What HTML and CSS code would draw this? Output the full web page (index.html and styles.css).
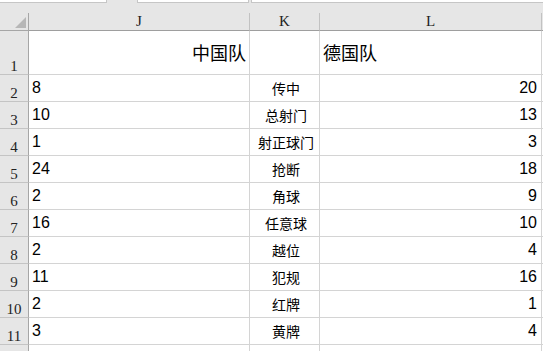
FILE: index.html
```
<!DOCTYPE html>
<html lang="zh">
<head>
<meta charset="utf-8">
<link rel="stylesheet" href="styles.css">
</head>
<body>
<div class="topbar">
  <div class="box b1"></div>
  <div class="sep s1"></div>
  <div class="box b2"></div>
  <div class="sep s2"></div>
  <div class="box b3"></div>
</div>
<div class="sheet">
  <div class="corner"><span class="tri"></span></div>
  <div class="colhead">J</div>
  <div class="colhead">K</div>
  <div class="colhead">L</div>
  <div class="colhead last"></div>

  <div class="rowhead tall">1</div>
  <div class="cell tall title right">中国队</div>
  <div class="cell tall"></div>
  <div class="cell tall title left">德国队</div>
  <div class="cell tall extra"></div>

  <div class="rowhead">2</div><div class="cell num">8</div><div class="cell mid">传中</div><div class="cell num right">20</div><div class="cell extra"></div>
  <div class="rowhead">3</div><div class="cell num">10</div><div class="cell mid">总射门</div><div class="cell num right">13</div><div class="cell extra"></div>
  <div class="rowhead">4</div><div class="cell num">1</div><div class="cell mid">射正球门</div><div class="cell num right">3</div><div class="cell extra"></div>
  <div class="rowhead">5</div><div class="cell num">24</div><div class="cell mid">抢断</div><div class="cell num right">18</div><div class="cell extra"></div>
  <div class="rowhead">6</div><div class="cell num">2</div><div class="cell mid">角球</div><div class="cell num right">9</div><div class="cell extra"></div>
  <div class="rowhead">7</div><div class="cell num">16</div><div class="cell mid">任意球</div><div class="cell num right">10</div><div class="cell extra"></div>
  <div class="rowhead">8</div><div class="cell num">2</div><div class="cell mid">越位</div><div class="cell num right">4</div><div class="cell extra"></div>
  <div class="rowhead">9</div><div class="cell num">11</div><div class="cell mid">犯规</div><div class="cell num right">16</div><div class="cell extra"></div>
  <div class="rowhead">10</div><div class="cell num">2</div><div class="cell mid">红牌</div><div class="cell num right">1</div><div class="cell extra"></div>
  <div class="rowhead">11</div><div class="cell num">3</div><div class="cell mid">黄牌</div><div class="cell num right">4</div><div class="cell extra"></div>
  <div class="rowhead"></div><div class="cell"></div><div class="cell"></div><div class="cell"></div><div class="cell extra"></div>
</div>
</body>
</html>
```
FILE: styles.css
```
html, body {
  margin: 0;
  padding: 0;
  background: #e6e6e6;
  width: 543px;
  height: 351px;
  overflow: hidden;
}

.topbar {
  display: flex;
  height: 13px;
  align-items: flex-start;
}
.box {
  height: 2px;
  background: #ffffff;
  border-bottom: 1px solid #c6c6c6;
}
.b1 { width: 106px; border-right: 1px solid #c6c6c6; }
.s1 { width: 30px; }
.b2 { width: 110px; border-left: 1px solid #c6c6c6; border-right: 1px solid #c6c6c6; }
.s2 { width: 2px; }
.b3 { flex: 1; border-left: 1px solid #c6c6c6; }

.sheet {
  display: grid;
  grid-template-columns: 29px 221px 70px 222px 1fr;
  grid-template-rows: 18px 44px repeat(11, 27px);
}

.corner {
  background: #e6e6e6;
  border-right: 1px solid #a6a6a6;
  border-bottom: 1px solid #a6a6a6;
  position: relative;
}
.tri {
  position: absolute;
  left: 15px;
  top: 4px;
  width: 0;
  height: 0;
  border-left: 11px solid transparent;
  border-bottom: 11px solid #b7b7b7;
}

.colhead {
  background: #e6e6e6;
  border-right: 1px solid #c2c2c2;
  border-bottom: 1px solid #9e9e9e;
  font-family: "Liberation Serif", serif;
  font-size: 15px;
  color: #222;
  display: flex;
  align-items: flex-end;
  justify-content: center;
  line-height: 15px;
  padding-bottom: 1px;
}
.colhead.last { border-right: none; }

.rowhead {
  background: #e6e6e6;
  border-right: 1px solid #a6a6a6;
  border-bottom: 1px solid #c4c4c4;
  font-family: "Liberation Serif", serif;
  font-size: 15px;
  color: #222;
  display: flex;
  align-items: flex-end;
  justify-content: center;
  line-height: 14px;
  padding-bottom: 1px;
}

.cell {
  background: #ffffff;
  border-right: 1px solid #d4d4d4;
  border-bottom: 1px solid #d4d4d4;
  display: flex;
  align-items: flex-end;
  white-space: nowrap;
  overflow: hidden;
  color: #000;
}
.cell.extra { border-right: none; }

.title {
  font-family: "Noto Sans CJK SC", sans-serif;
  font-size: 18px;
  align-items: center;
  line-height: 22px;
  padding-bottom: 1px;
}
.left { justify-content: flex-start; padding-left: 3px; }
.right { justify-content: flex-end; padding-right: 3px; }

.num {
  font-family: "Liberation Sans", Arial, sans-serif;
  font-size: 16px;
  line-height: 18px;
  padding-left: 3px;
  padding-bottom: 4px;
}
.num.right { padding-left: 0; padding-right: 4px; }

.mid {
  font-family: "Noto Sans CJK SC", sans-serif;
  font-size: 14px;
  justify-content: center;
  line-height: 18px;
  padding-bottom: 4px;
  padding-left: 3px;
}
```
